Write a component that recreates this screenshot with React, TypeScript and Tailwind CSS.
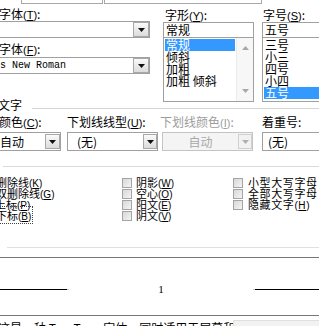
import React from "react";

const Tri = ({ disabled }: { disabled?: boolean }) => (
  <svg width="7" height="4" viewBox="0 0 7 4">
    <path d="M0 0h7L3.5 4z" fill={disabled ? "#b0b0b0" : "#111"} />
  </svg>
);

const Btn = ({ disabled, w = "w-[16px]" }: { disabled?: boolean; w?: string }) => (
  <div
    className={
      "h-[15px] shrink-0 flex items-center justify-center border " +
      w +
      (disabled
        ? " border-[#d0d0d0] bg-[#f2f2f2]"
        : " border-[#a8a8a8] bg-linear-to-b from-[#fafafa] to-[#dcdcdc]")
    }
  >
    <Tri disabled={disabled} />
  </div>
);

const U = ({ k, s = "text-[11px]" }: { k: string; s?: string }) => (
  <span className={"font-['Liberation_Sans',sans-serif] " + s}>
    (<span className="underline">{k}</span>)
  </span>
);

const Check = () => (
  <div className="w-[10px] h-[10px] shrink-0 border border-[#a4a4a4] bg-linear-to-br from-[#d8d8d8] to-[#f4f4f4]" />
);

const Up = () => (
  <svg width="7" height="4" viewBox="0 0 7 4">
    <path d="M0 4h7L3.5 0z" fill="#a8a8a8" />
  </svg>
);
const Down = () => (
  <svg width="7" height="4" viewBox="0 0 7 4">
    <path d="M0 0h7L3.5 4z" fill="#a8a8a8" />
  </svg>
);

export default function App() {
  return (
    <div className="w-[319px] h-[326px] overflow-hidden bg-white text-black text-[12px] font-['Noto_Sans_CJK_SC',sans-serif] leading-none flex flex-col">
      {/* top strip */}
      <div className="flex h-[4px] shrink-0">
        <div className="ml-[21px] w-[82px] shrink-0 border-x border-b border-[#a8a8a8]" />
        <div className="ml-[1px] w-[158px] shrink-0 border-x border-b border-[#a8a8a8]" />
      </div>

      {/* font selectors */}
      <div className="flex h-[98px] shrink-0">
        <div className="w-[150px] shrink-0 flex flex-col">
          <div className="mt-[3px] h-[14px] leading-[14px] -ml-[1px] whitespace-nowrap">
            字体<U k="T" />:
          </div>
          <div className="-ml-[10px] w-[160px] h-[17px] border border-[#a0a0a0] flex items-center justify-end">
            <Btn />
          </div>
          <div className="mt-[3px] h-[16px] leading-[16px] -ml-[1px] whitespace-nowrap">
            字体<U k="F" />:
          </div>
          <div className="-ml-[10px] w-[160px] h-[17px] border border-[#a0a0a0] flex items-center">
            <div className="flex-1 overflow-hidden whitespace-nowrap font-['Liberation_Mono',monospace] text-[10px] leading-[15px] -ml-[15px]">
              Times New Roman
            </div>
            <Btn />
          </div>
        </div>

        <div className="ml-[13px] w-[91px] shrink-0 flex flex-col">
          <div className="mt-[3px] h-[15px] leading-[15px] pl-[2px] whitespace-nowrap">
            字形<U k="Y" />:
          </div>
          <div className="h-[16px] border border-[#a0a0a0] pl-[2px] leading-[14px]">常规</div>
          <div className="h-[64px] border border-t-0 border-[#a0a0a0] flex">
            <div className="flex-1 flex flex-col pt-[1px] pl-[1px]">
              <div className="h-[12px] leading-[12px] bg-[#3399ff] text-white pl-[1px]">常规</div>
              <div className="h-[12px] leading-[12px] pl-[1px]">倾斜</div>
              <div className="h-[12px] leading-[12px] pl-[1px]">加粗</div>
              <div className="h-[12px] leading-[12px] pl-[1px] whitespace-nowrap">加粗 倾斜</div>
            </div>
            <div className="w-[17px] shrink-0 ml-[1px] bg-[#f7f7f7] border-l border-[#ececec] flex flex-col justify-between items-center py-[8px]">
              <Up />
              <Down />
            </div>
          </div>
        </div>

        <div className="ml-[8px] w-[70px] shrink-0 flex flex-col">
          <div className="mt-[3px] h-[15px] leading-[15px] pl-[1px] whitespace-nowrap">
            字号<U k="S" />:
          </div>
          <div className="h-[16px] border border-[#a0a0a0] pl-[2px] leading-[14px]">五号</div>
          <div className="h-[64px] border border-t-0 border-[#a0a0a0] flex flex-col pt-[1px] pl-[1px]">
            <div className="h-[12px] leading-[12px] pl-[1px]">三号</div>
            <div className="h-[12px] leading-[12px] pl-[1px]">小三</div>
            <div className="h-[12px] leading-[12px] pl-[1px]">四号</div>
            <div className="h-[12px] leading-[12px] pl-[1px]">小四</div>
            <div className="h-[12px] leading-[12px] pl-[1px] bg-[#3399ff] text-white">五号</div>
          </div>
        </div>
      </div>

      {/* 文字 group header */}
      <div className="-mt-[4px] h-[14px] flex items-start shrink-0">
        <div className="-ml-[2px] leading-[14px] whitespace-nowrap">文字</div>
        <div className="flex-1 ml-[10px] mt-[10px] h-[2px] border-t border-[#d4d4d4] border-b border-b-white" />
      </div>

      {/* labels row */}
      <div className="mt-[2px] h-[16px] flex leading-[16px] whitespace-nowrap shrink-0">
        <div className="-ml-[1px] w-[68px] shrink-0">
          颜色<U k="C" />:
        </div>
        <div className="w-[93px] shrink-0">
          下划线线型<U k="U" />:
        </div>
        <div className="w-[102px] shrink-0 text-[#9c9c9c]">
          下划线颜色<U k="I" />:
        </div>
        <div className="shrink-0">着重号:</div>
      </div>

      {/* dropdown row */}
      <div className="mt-[2px] h-[19px] flex shrink-0">
        <div className="-ml-[10px] w-[71px] shrink-0 border border-[#a0a0a0] flex items-center">
          <div className="flex-1 pl-[9px] leading-[17px]">自动</div>
          <Btn w="w-[15px]" />
        </div>
        <div className="ml-[6px] w-[91px] shrink-0 border border-[#a0a0a0] flex items-center">
          <div className="flex-1 pl-[9px] leading-[17px]">(无)</div>
          <Btn w="w-[14px]" />
        </div>
        <div className="ml-[4px] w-[91px] shrink-0 border border-[#c4c4c4] bg-[#f4f4f4] flex items-center">
          <div className="flex-1 text-center leading-[17px] text-[#a8a8a8]">自动</div>
          <Btn disabled w="w-[14px]" />
        </div>
        <div className="ml-[9px] w-[70px] shrink-0 border border-[#a0a0a0] flex items-center">
          <div className="flex-1 pl-[5px] leading-[17px]">(无)</div>
        </div>
      </div>

      {/* separator */}
      <div className="mt-[15px] ml-[3px] h-px bg-[#dadada] shrink-0" />

      {/* checkbox rows */}
      <div className="mt-[10px] flex flex-col whitespace-nowrap text-[11px] shrink-0">
        <div className="h-[11px] flex items-center leading-[11px]">
          <div className="-ml-[4px] w-[126px] shrink-0">删除线<U k="K" s="text-[10px]" /></div>
          <div className="w-[111px] shrink-0 flex items-center">
            <Check />
            <div className="ml-[4px]">阴影<U k="W" s="text-[10px]" /></div>
          </div>
          <div className="shrink-0 flex items-center">
            <Check />
            <div className="ml-[5px] tracking-[0.6px]">小型大写字母</div>
          </div>
        </div>
        <div className="h-[11px] flex items-center leading-[11px]">
          <div className="-ml-[4px] w-[126px] shrink-0">双删除线<U k="G" s="text-[10px]" /></div>
          <div className="w-[111px] shrink-0 flex items-center">
            <Check />
            <div className="ml-[4px]">空心<U k="O" s="text-[10px]" /></div>
          </div>
          <div className="shrink-0 flex items-center">
            <Check />
            <div className="ml-[5px] tracking-[0.6px]">全部大写字母</div>
          </div>
        </div>
        <div className="h-[11px] flex items-center leading-[11px]">
          <div className="-ml-[5px] w-[127px] shrink-0">上标<U k="P" s="text-[10px]" /></div>
          <div className="w-[111px] shrink-0 flex items-center">
            <Check />
            <div className="ml-[4px]">阳文<U k="E" s="text-[10px]" /></div>
          </div>
          <div className="shrink-0 flex items-center">
            <Check />
            <div className="ml-[5px] tracking-[0.6px]">隐藏文字<U k="H" s="text-[10px]" /></div>
          </div>
        </div>
        <div className="h-[11px] flex items-center leading-[11px]">
          <div className="-ml-[4px] w-[126px] shrink-0">
            <span className="outline-1 outline-dotted outline-[#444] pr-[1px]">下标<U k="B" s="text-[10px]" /></span>
          </div>
          <div className="w-[111px] shrink-0 flex items-center">
            <Check />
            <div className="ml-[4px]">阴文<U k="V" s="text-[10px]" /></div>
          </div>
        </div>
      </div>

      {/* preview */}
      <div className="mt-[26px] ml-[7px] h-px bg-[#e0e0e0] shrink-0" />
      <div className="mt-[9px] h-px bg-[#777777] shrink-0" />
      <div className="h-[57px] shrink-0 flex flex-col">
        <div className="mt-[26px] h-[11px] flex items-center">
          <div className="w-[67px] h-px bg-black shrink-0" />
          <div className="w-[2px] h-px bg-[#c8c8c8] shrink-0" />
          <div className="flex-1 text-center font-['Liberation_Serif',serif] text-[11px] leading-[11px]">1</div>
          <div className="w-[2px] h-px bg-[#c8c8c8] shrink-0" />
          <div className="w-[64px] h-px bg-black shrink-0" />
        </div>
      </div>
      <div className="h-px bg-[#777777] shrink-0" />
      <div className="flex shrink-0 h-[20px]">
        <div className="w-[235px] shrink-0 overflow-hidden whitespace-nowrap -ml-[2px] text-[12px] leading-[20px] pt-[2px] text-black">
          这是一种 TrueType 字体，同时适用于屏幕和打印机。
        </div>
        <div className="flex-1 mt-[4px] h-[10px] bg-[#f2f2f2] border-t border-l border-[#e0e0e0]" />
      </div>
    </div>
  );
}
